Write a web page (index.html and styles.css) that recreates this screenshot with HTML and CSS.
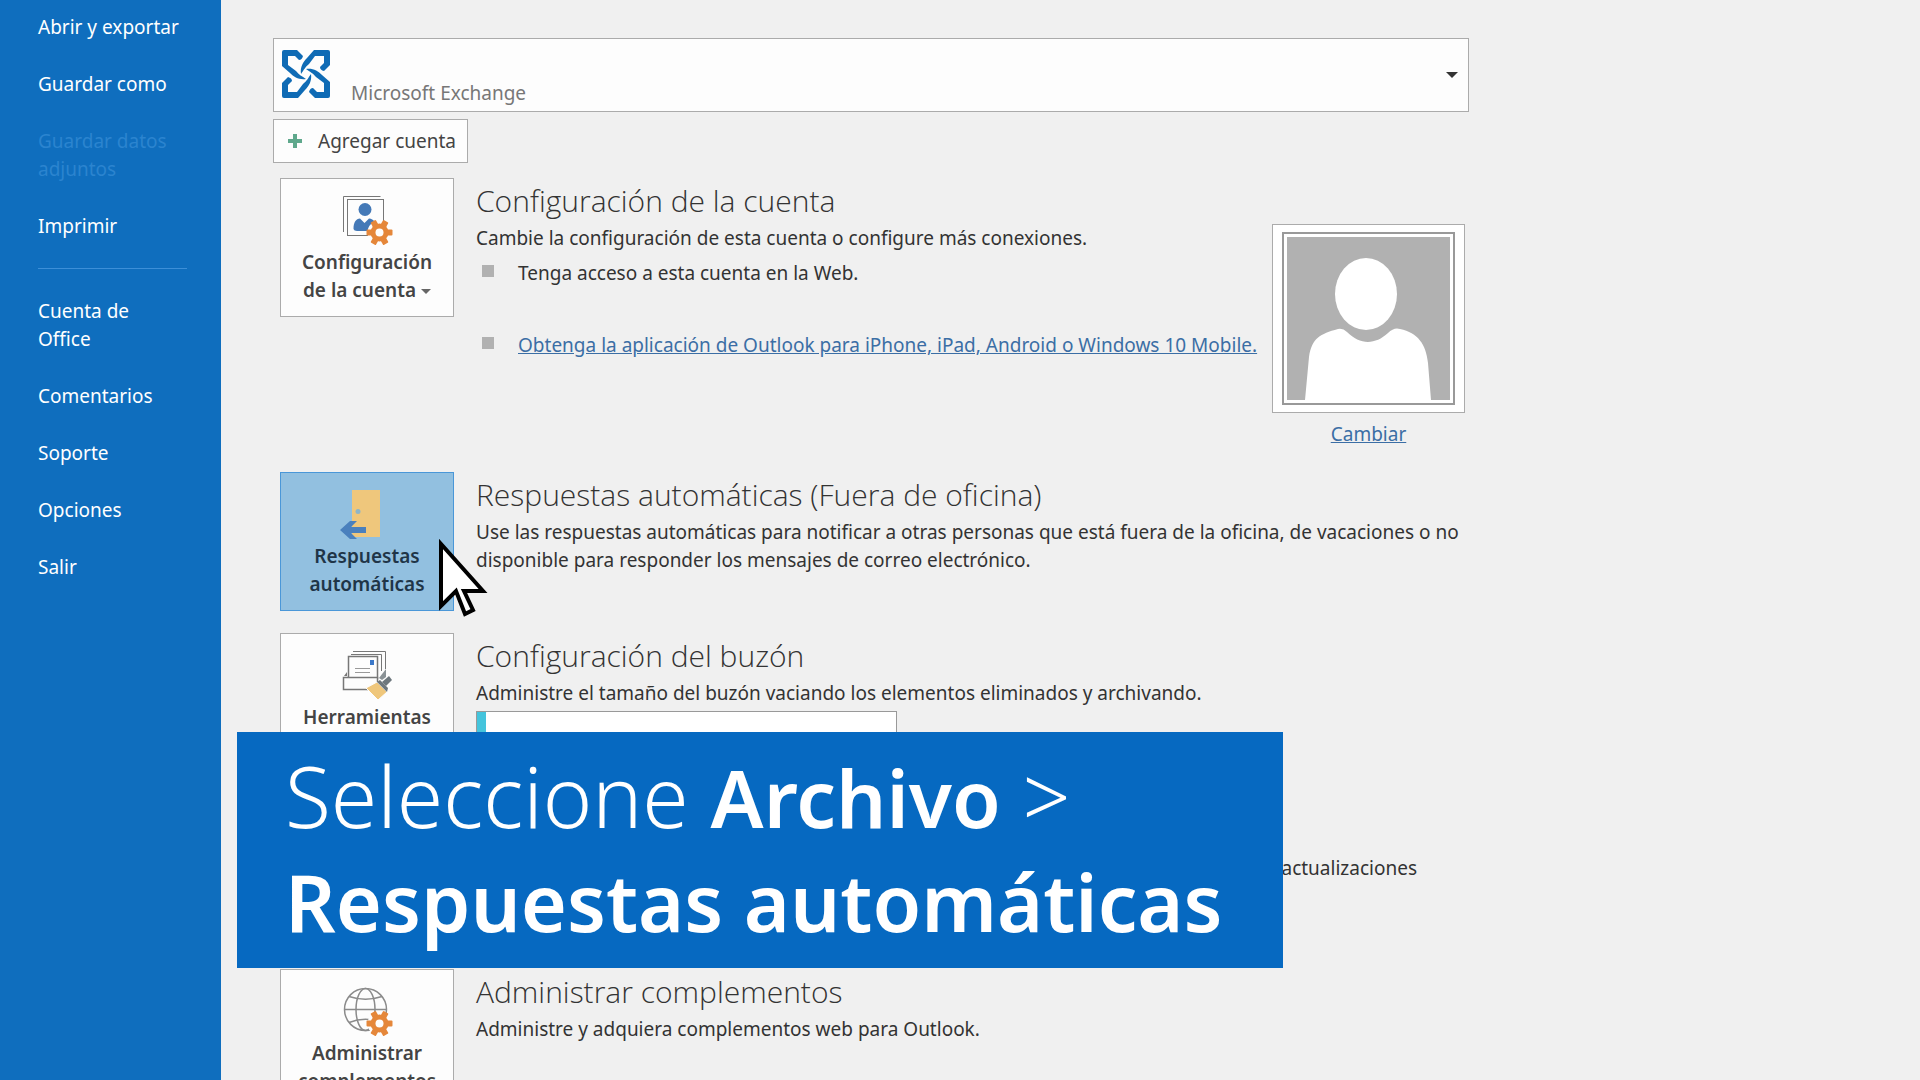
FILE: index.html
```html
<!DOCTYPE html>
<html lang="es">
<head>
<meta charset="utf-8">
<title>Información de la cuenta</title>
<link rel="stylesheet" href="styles.css">
</head>
<body>
<svg class="defs" width="0" height="0" aria-hidden="true">
  <defs>
    <g id="gear">
      <g fill="#e5873a">
        <rect x="-3" y="-13" width="6" height="26" rx="1" transform="rotate(90)"/>
        <rect x="-3" y="-13" width="6" height="26" rx="1" transform="rotate(30)"/>
        <rect x="-3" y="-13" width="6" height="26" rx="1" transform="rotate(-30)"/>
        <circle r="9"/>
      </g>
      <circle r="4" fill="#fdfdfd"/>
    </g>
  </defs>
</svg>
<div class="app">
  <nav class="sidebar">
    <a href="#">Abrir y exportar</a>
    <a href="#">Guardar como</a>
    <a href="#" class="disabled" aria-disabled="true">Guardar datos<br>adjuntos</a>
    <a href="#">Imprimir</a>
    <hr>
    <a href="#">Cuenta de<br>Office</a>
    <a href="#">Comentarios</a>
    <a href="#">Soporte</a>
    <a href="#">Opciones</a>
    <a href="#">Salir</a>
  </nav>

  <main class="content">
    <div class="account">
      <select class="account-select" aria-label="Cuenta">
        <option>Microsoft Exchange</option>
      </select>
      <svg class="account-logo" width="48" height="48" viewBox="0 0 48 48" aria-hidden="true">
        <defs><path id="arm" d="M2 0H15L21 6Q20 10 17 10L13 6H6V15L14 21C17 25 20 26 24 29C17 30 12 27 8 23L0 16V2Q0 0 2 0Z"/></defs>
        <g fill="#0f6bb5">
          <use href="#arm"/>
          <use href="#arm" transform="rotate(90 24 24)"/>
          <use href="#arm" transform="rotate(180 24 24)"/>
          <use href="#arm" transform="rotate(270 24 24)"/>
        </g>
      </svg>
      <svg class="account-arrow" width="12" height="6" viewBox="0 0 12 6" aria-hidden="true"><path d="M0 0H12L6 6Z" fill="#333"/></svg>
    </div>
    <button type="button" class="add-account">
      <svg width="14" height="14" viewBox="0 0 14 14" aria-hidden="true"><path d="M5 0H9V5H14V9H9V14H5V9H0V5H5Z" fill="#5fa88c"/></svg>
      Agregar cuenta
    </button>

    <div class="sections">
      <section class="section">
        <button type="button" class="tile">
          <svg width="48" height="50" viewBox="0 0 48 50" aria-hidden="true">
            <path d="M.5 36V.5H37.500" fill="none" stroke="#777" stroke-width="1"/>
            <rect x="4.500" y="3.500" width="36" height="36" fill="#fdfdfd" stroke="#777"/>
            <circle cx="22" cy="13.500" r="6.500" fill="#4479b7"/>
            <path d="M10.500 33C10.500 26 13 23 17 22.500L21.500 27L26 22.500C31 23 33 26 33 35H14Q11 35 10.500 33Z" fill="#4479b7"/>
            <circle cx="36.500" cy="36.500" r="12" fill="#fdfdfd"/>
            <use href="#gear" x="36.500" y="36.500"/>
          </svg>
          <span>Configuración<br>de la cuenta<i class="caret"></i></span>
        </button>
        <div class="body">
          <h2>Configuración de la cuenta</h2>
          <p>Cambie la configuración de esta cuenta o configure más conexiones.</p>
          <ul>
            <li>Tenga acceso a esta cuenta en la Web.</li>
            <li><a href="#">Obtenga la aplicación de Outlook para iPhone, iPad, Android o Windows 10 Mobile.</a></li>
          </ul>
        </div>
        <div class="photo">
          <div class="photo-frame">
            <svg viewBox="0 0 163 163" role="img" aria-label="Foto de perfil">
              <rect width="163" height="163" fill="#b1b1b1"/>
              <ellipse cx="79" cy="57" rx="31" ry="36" fill="#fff"/>
              <path d="M18 163L22 120C25 101 33 97 51 92Q56 91 60 95C73 108 88 108 101 96Q107 90 113 92C131 96 139 107 141 126L144 163Z" fill="#fff"/>
            </svg>
          </div>
          <a href="#">Cambiar</a>
        </div>
      </section>

      <section class="section">
        <button type="button" class="tile active">
          <svg width="48" height="50" viewBox="0 0 48 50" aria-hidden="true">
            <rect x="9" y="0" width="28" height="47" fill="#efc77c"/>
            <circle cx="15" cy="21.500" r="2.500" fill="#8fb6c8"/>
            <path d="M-3 40L7 31H14L8 37H23V43H8L14 49H7Z" fill="#4a80bd"/>
          </svg>
          <span>Respuestas<br>automáticas</span>
        </button>
        <svg class="pointer" width="50" height="80" viewBox="0 0 50 80" aria-hidden="true">
          <path d="M2 5V67L17 52L26 75L34 71L25 52H44Z" fill="#fff" stroke="#000" stroke-width="4"/>
        </svg>
        <div class="body">
          <h2>Respuestas automáticas (Fuera de oficina)</h2>
          <p>Use las respuestas automáticas para notificar a otras personas que está fuera de la oficina, de vacaciones o no disponible para responder los mensajes de correo electrónico.</p>
        </div>
      </section>

      <section class="section mailbox">
        <button type="button" class="tile">
          <svg width="48" height="50" viewBox="0 0 48 50" aria-hidden="true">
            <g fill="#fdfdfd" stroke="#777">
              <path d="M10 .5H42.500V18M8 3.500H38.500V20" fill="none"/>
              <rect x="5.500" y="5.500" width="29" height="22" stroke-width="1.500"/>
              <path d="M.5 26.500H34.500V38.500H.5Z" stroke-width="1.500"/>
              <path d="M12 17.500H27M12 21.500H27" stroke="#999"/>
            </g>
            <path d="M1 25L4 21V25Z" fill="#777"/>
            <rect x="27" y="9" width="4" height="5" fill="#3b78c9"/>
            <path d="M36 27L43 18V26L39 29Z" fill="#8a9296"/>
            <path d="M23 37L34 31L44 41L35 49Z" fill="#efc77c" stroke="#fdfdfd"/>
            <path d="M34 31L37 29L45 37L44 41Z" fill="#6d777d"/>
            <path d="M39 31L46 25L49 29L43 35Z" fill="#6d777d"/>
          </svg>
          <span>Herramientas</span>
        </button>
        <div class="body">
          <h2>Configuración del buzón</h2>
          <p>Administre el tamaño del buzón vaciando los elementos eliminados y archivando.</p>
          <div class="quota"><div class="quota-used"></div></div>
        </div>
      </section>

      <section class="section rules">
        <div class="body">
          <p>actualizaciones</p>
        </div>
      </section>

      <section class="section">
        <button type="button" class="tile">
          <svg width="48" height="50" viewBox="0 0 48 50" aria-hidden="true">
            <g fill="none" stroke="#8b8b8b" stroke-width="1.500">
              <circle cx="22.500" cy="22.500" r="21"/>
              <ellipse cx="22.500" cy="22.500" rx="9.500" ry="21"/>
              <path d="M1.500 22.500H43.500M6 9.500Q22.500 15 39 9.500M6 35.500Q22.500 29 39 35.500"/>
            </g>
            <circle cx="36.500" cy="36.500" r="12" fill="#fdfdfd"/>
            <use href="#gear" x="36.500" y="36.500"/>
          </svg>
          <span>Administrar<br>complementos</span>
        </button>
        <div class="body">
          <h2>Administrar complementos</h2>
          <p>Administre y adquiera complementos web para Outlook.</p>
        </div>
      </section>
    </div>

    <div class="caption">Seleccione <b>Archivo</b> &gt;<br><b>Respuestas automáticas</b></div>
  </main>
</div>
</body>
</html>
```
FILE: styles.css
```css
* {
  box-sizing: border-box;
}

body {
  margin: 0;
  background: #f0f0f0;
  color: #333;
  font-family: "Noto Sans", "Open Sans", sans-serif;
  font-size: 19px;
  line-height: 28px;
}

h2, p, ul {
  margin: 0;
  padding: 0;
}

button, select {
  font: inherit;
  color: inherit;
}

.defs {
  position: absolute;
}

.app {
  display: flex;
  height: 100vh;
  overflow: hidden;
}

/* Sidebar */
.sidebar {
  flex: none;
  width: 221px;
  display: flex;
  flex-direction: column;
  gap: 29px;
  padding: 13px 34px 13px 38px;
  background: #0f6ebe;
}

.sidebar a {
  color: #fff;
  text-decoration: none;
  white-space: nowrap;
}

.sidebar .disabled {
  color: #2b84cf;
}

.sidebar hr {
  width: 100%;
  height: 1px;
  margin: -1px 0;
  border: 0;
  background: #3c8fd8;
}

/* Account header */
.content {
  position: relative;
  flex: 1;
  padding: 38px 52px;
}

.account {
  position: relative;
  max-width: 1196px;
  margin-bottom: 7px;
}

.account-select {
  display: block;
  width: 100%;
  height: 74px;
  padding: 36px 40px 0 77px;
  appearance: none;
  border: 1px solid #ababab;
  border-radius: 0;
  background: #fdfdfd;
  color: #777;
}

.account-logo {
  position: absolute;
  left: 9px;
  top: 12px;
}

.account-arrow {
  position: absolute;
  right: 11px;
  top: 34px;
}

.add-account {
  display: flex;
  align-items: center;
  gap: 16px;
  height: 44px;
  padding: 0 11px 0 14px;
  border: 1px solid #ababab;
  background: #fdfdfd;
  color: #444;
}

/* Sections */
.sections {
  display: flex;
  flex-direction: column;
  gap: 22px;
  max-width: 1196px;
  padding: 15px 0 0 7px;
}

.section {
  position: relative;
  display: flex;
  align-items: flex-start;
  gap: 22px;
}

.tile {
  flex: none;
  display: flex;
  flex-direction: column;
  align-items: center;
  gap: 2px;
  width: 174px;
  min-height: 139px;
  padding: 17px 0 0;
  border: 1px solid #ababab;
  background: #fdfdfd;
  color: #444;
  font-weight: 600;
}

.tile svg {
  overflow: visible;
}

.tile.active {
  border-color: #4a97d8;
  background: #92c0e0;
  color: #1f3548;
}

.caret {
  display: inline-block;
  margin-left: 5px;
  border: 5px solid transparent;
  border-top-color: #666;
  border-bottom: 0;
  vertical-align: middle;
}

.body {
  flex: 1;
}

.body h2 {
  padding: 2px 0;
  font-family: "Open Sans", "Noto Sans", sans-serif;
  font-size: 30px;
  font-weight: 300;
  line-height: 42px;
}

.body ul {
  display: flex;
  flex-direction: column;
  gap: 44px;
  padding: 7px 0 0;
  list-style: none;
}

.body li {
  display: flex;
  gap: 24px;
  white-space: nowrap;
}

.body li::before {
  content: "";
  width: 12px;
  height: 12px;
  margin: 6px 0 0 6px;
  background: #b1b1b1;
}

.body a, .photo a {
  color: #3b6ea5;
}

.photo {
  display: flex;
  flex-direction: column;
  align-items: center;
  gap: 7px;
  padding: 46px 4px 2px 0;
  margin-left: -20px;
}

.photo-frame {
  width: 193px;
  padding: 7px 9px;
  border: 1px solid #ababab;
  background: #fff;
}

.photo-frame svg {
  display: block;
  width: 100%;
  padding: 3px;
  border: 2px solid #999;
}

.pointer {
  position: absolute;
  left: 159px;
  top: 67px;
}

.mailbox {
  padding-bottom: 14px;
}

.quota {
  width: 421px;
  height: 30px;
  margin-top: 4px;
  border: 1px solid #999;
  background: #fff;
}

.quota-used {
  width: 9px;
  height: 100%;
  background: #44c4dc;
}

.rules {
  min-height: 139px;
  padding: 46px 52px 0 0;
  text-align: right;
}

/* Caption over the page */
.caption {
  position: absolute;
  left: 16px;
  top: 732px;
  padding: 12px 60px 16px 48px;
  background: #0669c1;
  color: #fff;
  font-size: 84px;
  font-weight: 300;
  line-height: 104px;
  white-space: nowrap;
}

.caption b {
  font-size: 79px;
  font-weight: 600;
  line-height: 80px;
}
```
